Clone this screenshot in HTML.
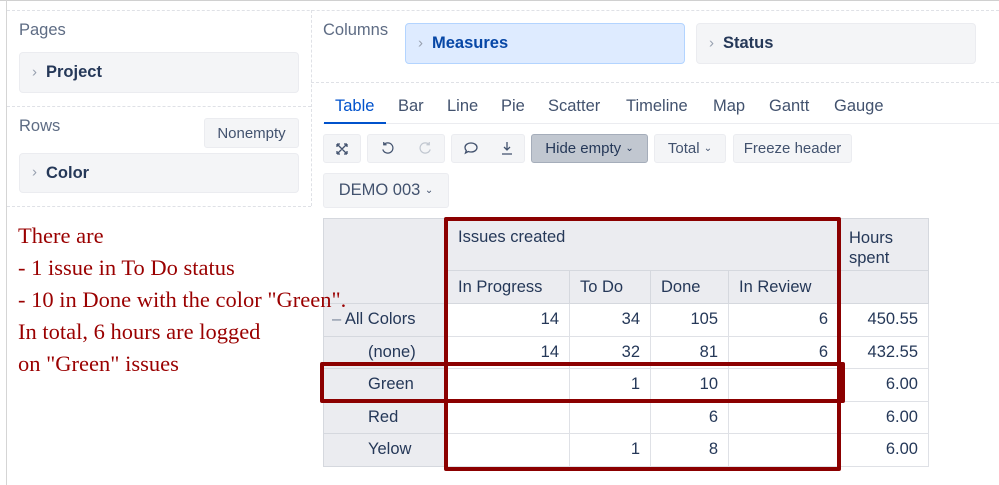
<!DOCTYPE html>
<html><head><meta charset="utf-8"><style>
*{box-sizing:border-box;margin:0;padding:0}
body{width:999px;height:485px;background:#fff;font-family:"Liberation Sans",Arial,sans-serif;color:#172b4d;position:relative;overflow:hidden}
.a{position:absolute}
.lbl{color:#5e6c84;font-size:16.5px}
.pill{position:absolute;background:#f4f5f7;border:1px solid #ebecf0;border-radius:4px;font-size:16.5px;font-weight:bold;color:#253858;padding-left:26px;display:flex;align-items:center}
.pill:before{content:"›";position:absolute;left:12px;color:#97a0af;font-weight:normal;font-size:15px;top:50%;transform:translateY(-55%)}
.btn{position:absolute;background:#f4f5f7;border:1px solid #ebecf0;border-radius:3px;font-size:15px;color:#42526e;display:flex;align-items:center;justify-content:center}
.dash{position:absolute;border-color:#dfe1e6;border-style:dashed;border-width:0}
.tab{position:absolute;top:97px;font-size:16.5px;color:#42526e}
table{position:absolute;left:323px;top:218px;border-collapse:collapse;font-size:16.5px;color:#253858}
td{border:1px solid #dfe1e6;height:32.5px;padding:0 10px;text-align:right}
.h td{background:#ebecf0;text-align:left;border-color:#d5d8de}
td.r{background:#ebecf0;text-align:left;border-color:#d5d8de}
.note{position:absolute;left:18px;top:220px;font-family:"Liberation Serif",serif;font-size:22.5px;line-height:32px;color:#9a0000;white-space:nowrap}
.red{position:absolute;border:4px solid #8b0000;border-radius:2px}
</style></head><body>
<div class="a" style="left:0;top:0;width:999px;height:1px;background:#d0d0d0"></div>
<div class="a" style="left:6px;top:0;width:1px;height:485px;background:#d5d5d5"></div>
<div class="dash" style="left:7px;top:10px;width:992px;border-top-width:1px"></div>
<div class="dash" style="left:311px;top:10px;height:196px;border-left-width:1px"></div>
<div class="dash" style="left:7px;top:106px;width:304px;border-top-width:1px"></div>
<div class="dash" style="left:7px;top:206px;width:304px;border-top-width:1px"></div>
<div class="dash" style="left:311px;top:82px;width:688px;border-top-width:1px"></div>

<div class="a lbl" style="left:19px;top:21px">Pages</div>
<div class="pill" style="left:19px;top:52px;width:280px;height:41px">Project</div>
<div class="a lbl" style="left:19px;top:117px">Rows</div>
<div class="btn" style="left:204px;top:118px;width:95px;height:30px">Nonempty</div>
<div class="pill" style="left:19px;top:153px;width:280px;height:40px">Color</div>

<div class="a lbl" style="left:323px;top:21px">Columns</div>
<div class="pill" style="left:405px;top:23px;width:280px;height:41px;background:#deebff;border-color:#b3d4ff;color:#0747a6">Measures</div>
<div class="pill" style="left:696px;top:23px;width:280px;height:41px">Status</div>

<div class="tab" style="left:335px;color:#0052cc">Table</div>
<div class="tab" style="left:398px">Bar</div>
<div class="tab" style="left:447px">Line</div>
<div class="tab" style="left:501px">Pie</div>
<div class="tab" style="left:548px">Scatter</div>
<div class="tab" style="left:626px">Timeline</div>
<div class="tab" style="left:713px">Map</div>
<div class="tab" style="left:769px">Gantt</div>
<div class="tab" style="left:834px">Gauge</div>
<div class="a" style="left:323px;top:123px;width:676px;height:1px;background:#ebecf0"></div>
<div class="a" style="left:324px;top:122px;width:62px;height:2px;background:#0052cc"></div>

<div class="btn" style="left:323px;top:134px;width:38px;height:29px"><svg width="14" height="14" viewBox="0 0 14 14" fill="none" stroke="#42526e" stroke-width="1.3"><path d="M2 2l10 10M12 2L2 12M2 2h3M2 2v3M12 2h-3M12 2v3M2 12h3M2 12v-3M12 12h-3M12 12v-3"/></svg></div>
<div class="btn" style="left:367px;top:134px;width:78px;height:29px;justify-content:space-around"><svg width="15" height="15" viewBox="0 0 16 16" fill="none" stroke="#42526e" stroke-width="1.3"><path d="M4 4a5.5 5.5 0 1 1-1 5M4 1v3h3"/></svg><svg width="15" height="15" viewBox="0 0 16 16" fill="none" stroke="#c1c7d0" stroke-width="1.3"><path d="M12 4a5.5 5.5 0 1 0 1 5M12 1v3h-3"/></svg></div>
<div class="btn" style="left:451px;top:134px;width:74px;height:29px;justify-content:space-around"><svg width="16" height="15" viewBox="0 0 16 15" fill="none" stroke="#42526e" stroke-width="1.3"><path d="M8 2c3.5 0 6 2 6 4.5S11.5 11 8 11c-1 0-2-.2-2.8-.5L2.5 12l.8-2.5C2.5 8.7 2 7.6 2 6.5 2 4 4.5 2 8 2z"/></svg><svg width="14" height="15" viewBox="0 0 14 15" fill="none" stroke="#42526e" stroke-width="1.3"><path d="M7 1v8M4 6l3 3 3-3M2 13h10"/></svg></div>
<div class="btn" style="left:531px;top:134px;width:117px;height:29px;background:#c1c7d0;border-color:#a5adba;color:#253858">Hide empty&nbsp; <span style="font-size:10px">⌄</span></div>
<div class="btn" style="left:654px;top:134px;width:72px;height:29px">Total&nbsp; <span style="font-size:10px">⌄</span></div>
<div class="btn" style="left:733px;top:134px;width:119px;height:29px">Freeze header</div>
<div class="btn" style="left:323px;top:173px;width:126px;height:35px;font-size:16.5px">DEMO 003&nbsp; <span style="font-size:10px">⌄</span></div>

<table>
<tr class="h"><td style="width:124px;height:52px" rowspan="2"></td><td colspan="4" style="vertical-align:top;padding-top:9px;height:52px">Issues created</td><td style="width:90px;vertical-align:top;padding-top:9px;line-height:20px">Hours<br>spent</td></tr>
<tr class="h"><td style="width:122px;height:33px">In Progress</td><td style="width:81px">To Do</td><td style="width:78px">Done</td><td style="width:110px">In Review</td><td></td></tr>
<tr><td class="r" style="padding-left:8px"><span style="color:#7a869a">–</span> All Colors</td><td>14</td><td>34</td><td>105</td><td>6</td><td>450.55</td></tr>
<tr><td class="r" style="padding-left:44px">(none)</td><td>14</td><td>32</td><td>81</td><td>6</td><td>432.55</td></tr>
<tr><td class="r" style="padding-left:44px">Green</td><td></td><td>1</td><td>10</td><td></td><td>6.00</td></tr>
<tr><td class="r" style="padding-left:44px">Red</td><td></td><td></td><td>6</td><td></td><td>6.00</td></tr>
<tr><td class="r" style="padding-left:44px">Yelow</td><td></td><td>1</td><td>8</td><td></td><td>6.00</td></tr>
</table>

<div class="red" style="left:444px;top:217px;width:397px;height:254px"></div>
<div class="red" style="left:320px;top:362px;width:525px;height:41px"></div>

<div class="note">There are<br>- 1 issue in To Do status<br>- 10 in Done with the color "Green".<br>In total, 6 hours are logged<br>on "Green" issues</div>
</body></html>
